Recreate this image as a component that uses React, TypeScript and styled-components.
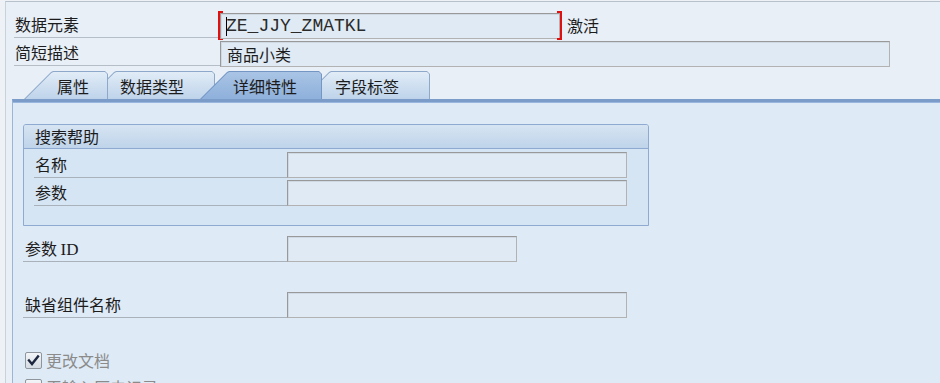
import React from "react";
import styled, { createGlobalStyle, css } from "styled-components";

const GlobalStyle = createGlobalStyle`
  html, body {
    margin: 0;
    padding: 0;
    height: 100%;
    background: #eef2f7;
    overflow: hidden;
  }
  #root {
    height: 100%;
  }
`;

const CJK = `"Noto Sans CJK SC", "Noto Sans", sans-serif`;

const tabs = [
  { label: "属性", width: 84, shift: 0 },
  { label: "数据类型", width: 128, shift: -21 },
  { label: "详细特性", width: 122, shift: -15, active: true },
  { label: "字段标签", width: 128, shift: -20 },
];

const App = () => {
  return (
    <SScreen>
      <GlobalStyle />
      <SHeader>
        <SHeadRow>
          <SHeadLabel>数据元素</SHeadLabel>
          <SMarked>
            <SField $w={340} $mono>
              <SCaret />
              ZE_JJY_ZMATKL
            </SField>
          </SMarked>
          <SStatus>激活</SStatus>
        </SHeadRow>
        <SHeadRow>
          <SHeadLabel>简短描述</SHeadLabel>
          <SField $w={670}>商品小类</SField>
        </SHeadRow>
      </SHeader>

      <STabStrip>
        {tabs.map((t, i) => (
          <STab
            key={t.label}
            $w={t.width}
            $shift={t.shift}
            $active={!!t.active}
            style={{ zIndex: t.active ? 50 : tabs.length - i }}
          >
            <STabFace $active={!!t.active}>
              <STabText>{t.label}</STabText>
            </STabFace>
          </STab>
        ))}
      </STabStrip>

      <SPanel>
        <SGroup>
          <SGroupTitle>搜索帮助</SGroupTitle>
          <SGroupBody>
            <SFormRow>
              <SFormLabel $w={253}>名称</SFormLabel>
              <SField $w={340} />
            </SFormRow>
            <SFormRow>
              <SFormLabel $w={253}>参数</SFormLabel>
              <SField $w={340} />
            </SFormRow>
          </SGroupBody>
        </SGroup>

        <SLooseRow $top={10}>
          <SFormLabel $w={264} $pad={2}>
            参数 <SLatin>ID</SLatin>
          </SFormLabel>
          <SField $w={230} />
        </SLooseRow>
        <SLooseRow $top={30}>
          <SFormLabel $w={264} $pad={2}>
            缺省组件名称
          </SFormLabel>
          <SField $w={340} />
        </SLooseRow>

        <SCheckRow $top={34}>
          <SCheckBox>
            <svg width="13" height="13" viewBox="0 0 13 13">
              <path
                d="M2 6.5 L5 10 L11 2.5"
                fill="none"
                stroke="#1d2740"
                strokeWidth="2.4"
                strokeLinecap="square"
              />
            </svg>
          </SCheckBox>
          <SCheckText>更改文档</SCheckText>
        </SCheckRow>
        <SCheckRow $top={10}>
          <SCheckBox />
          <SCheckText>无输入历史记录</SCheckText>
        </SCheckRow>
      </SPanel>
    </SScreen>
  );
};

export default App;

const SScreen = styled.div`
  display: flex;
  flex-direction: column;
  height: calc(100% - 2px);
  margin: 1px 0 0 5px;
  border-top: 1px solid #b7c1cb;
  border-left: 1px solid #c9d1d9;
  background: #e8eff7;
  font-family: ${CJK};
  font-size: 16px;
  color: #1c1c1c;
`;

const SHeader = styled.div`
  display: flex;
  flex-direction: column;
  gap: 1px;
  padding: 10px 0 0 8px;
`;

const SHeadRow = styled.div`
  display: flex;
  align-items: flex-end;
  height: 27px;
`;

const SHeadLabel = styled.div`
  width: 206px;
  height: 26px;
  box-sizing: border-box;
  padding-left: 1px;
  line-height: 24px;
  border-bottom: 1px solid #b5bdc6;
  margin-bottom: 1px;
  white-space: nowrap;
`;

const SMarked = styled.div`
  position: relative;
  display: flex;
  &::before,
  &::after {
    content: "";
    position: absolute;
    top: -2px;
    bottom: -1px;
    width: 3px;
    border: 2px solid #e01010;
  }
  &::before {
    left: -2px;
    border-right: none;
  }
  &::after {
    right: -2px;
    border-left: none;
  }
`;

const SField = styled.div<{ $w: number; $mono?: boolean }>`
  position: relative;
  display: flex;
  align-items: center;
  width: ${(p) => p.$w}px;
  height: 26px;
  box-sizing: border-box;
  padding-left: 6px;
  background: #dfeaf4;
  border: 1px solid;
  border-color: #999 #b2b2b2 #b2b2b2 #999;
  box-shadow: inset 1px 1px 0 #cfd9e3;
  white-space: nowrap;
  ${(p) =>
    p.$mono &&
    css`
      font-family: "Liberation Mono", "DejaVu Sans Mono", monospace;
      font-size: 18px;
      color: #2a2a2a;
      padding-left: 5px;
    `}
`;

const SCaret = styled.span`
  width: 1px;
  height: 19px;
  background: #000;
  margin-right: -1px;
`;

const SStatus = styled.div`
  margin-left: 7px;
  height: 26px;
  line-height: 26px;
  align-self: flex-start;
`;

const STabStrip = styled.div`
  display: flex;
  margin: 4px 0 0 18px;
  height: 28px;
`;

const tabShape = `polygon(0 100%, 27px 1px, 29px 0, calc(100% - 3px) 0, 100% 3px, 100% 100%)`;
const faceShape = `polygon(0.4px 100%, 26.4px 1px, 28.4px 0, calc(100% - 2px) 0, 100% 2px, 100% 100%)`;

const STab = styled.div<{ $w: number; $shift: number; $active: boolean }>`
  position: relative;
  flex: none;
  width: ${(p) => p.$w}px;
  height: 28px;
  margin-left: ${(p) => p.$shift}px;
  clip-path: ${tabShape};
  background: ${(p) => (p.$active ? "#7496c4" : "#8ea8ca")};
`;

const STabFace = styled.div<{ $active: boolean }>`
  position: absolute;
  inset: 1px 1px 0 1px;
  clip-path: ${faceShape};
  background: ${(p) =>
    p.$active
      ? "linear-gradient(#a9c4e5, #8eb0db)"
      : "linear-gradient(#e1ecf7, #bed3ea)"};
  display: flex;
  align-items: center;
  padding-left: 32px;
`;

const STabText = styled.span`
  line-height: 26px;
  white-space: nowrap;
`;

const SPanel = styled.div`
  flex: 1;
  display: flex;
  flex-direction: column;
  margin-left: 6px;
  padding: 22px 0 0 10px;
  background: #deeaf5;
  border-top: 3px solid #7b9cc9;
  border-left: 1px solid #9db5d4;
  box-shadow: inset 0 1px 0 #98b6de;
`;

const SGroup = styled.div`
  width: 626px;
  box-sizing: border-box;
  border: 1px solid #8eaad0;
  border-radius: 3px 3px 0 0;
  background: #d5e5f4;
`;

const SGroupTitle = styled.div`
  height: 23px;
  line-height: 23px;
  padding-left: 11px;
  border-bottom: 1px solid #8eaad0;
  border-radius: 2px 2px 0 0;
  background: linear-gradient(#d6e4f2, #bfd4ea);
`;

const SGroupBody = styled.div`
  display: flex;
  flex-direction: column;
  gap: 2px;
  padding: 3px 0 19px 10px;
`;

const SFormRow = styled.div`
  display: flex;
  align-items: flex-end;
  height: 26px;
`;

const SLooseRow = styled(SFormRow)<{ $top: number }>`
  margin-top: ${(p) => p.$top}px;
`;

const SFormLabel = styled.div<{ $w: number; $pad?: number }>`
  width: ${(p) => p.$w}px;
  height: 26px;
  box-sizing: border-box;
  padding-left: ${(p) => p.$pad ?? 1}px;
  line-height: 24px;
  border-bottom: 1px solid #a9b1ba;
  white-space: nowrap;
`;

const SLatin = styled.span`
  font-family: "Liberation Serif", "Noto Sans CJK SC", serif;
  font-size: 17px;
`;

const SCheckRow = styled.div<{ $top: number }>`
  display: flex;
  align-items: center;
  gap: 4px;
  margin-top: ${(p) => p.$top}px;
  padding-left: 2px;
  height: 17px;
`;

const SCheckBox = styled.div`
  width: 17px;
  height: 17px;
  box-sizing: border-box;
  display: flex;
  align-items: center;
  justify-content: center;
  border: 1px solid #8f959c;
  border-radius: 2px;
  background: linear-gradient(#f3f5f8, #d6dce3);
`;

const SCheckText = styled.span`
  color: #8b8b8b;
  line-height: 17px;
  white-space: nowrap;
`;
